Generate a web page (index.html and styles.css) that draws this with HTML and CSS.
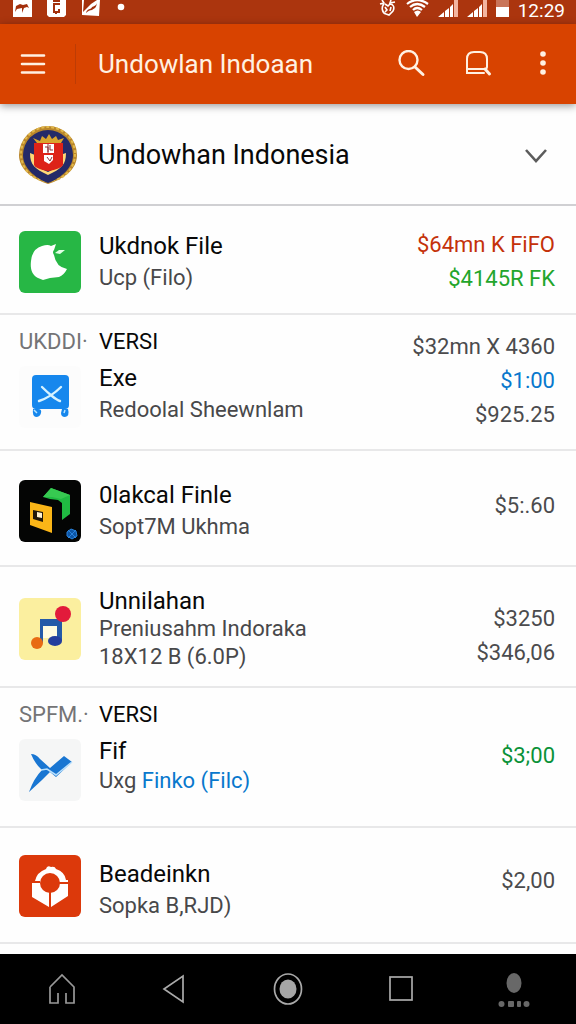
FILE: index.html
```html
<!DOCTYPE html>
<html lang="id">
<head>
    <meta charset="UTF-8">
    <meta name="viewport" content="width=device-width, initial-scale=1.0">
    <title>Undowhan Indonesia</title>
    <link rel="stylesheet" href="styles.css">
</head>
<body>
    <div class="status-bar">
        <div class="status-left">
            <svg width="19" height="17" viewBox="0 0 19 17"><path d="M0 0h19v17H0z" fill="#fff"/><path d="M3 6l4-2 3 1 4-1 2 4-2-1-3 1-2 5v-5l-5 1-2 3z" fill="#a3300c"/></svg>
            <svg width="19" height="17" viewBox="0 0 19 17"><path d="M0 0h19v15l-2 2H2l-2-2z" fill="#fff"/><path d="M6 1h7M13 4H7v8h5V9M9 12v2" fill="none" stroke="#a3300c" stroke-width="2"/></svg>
            <svg width="19" height="17" viewBox="0 0 19 17"><path d="M1 0h18l-1 16-17-1z" fill="#fff"/><path d="M3 0h13l-6 4-8 8zM5 13c1-5 5-3 6-6 2-1 4-1 5-4-1 5-2 5-5 7-2 0-4 1-6 3z" fill="#a3300c"/></svg>
            <svg width="12" height="17" viewBox="0 0 12 17"><circle cx="6" cy="7" r="3.300" fill="#fff"/></svg>
        </div>
        <div class="status-right">
            <svg width="18" height="17" viewBox="0 0 18 17"><path d="M5 4C2 7 3 13 7 14l3 1 4-4c2-4 0-7-3-7l-2 2-3-2M1 4l4-1-2-3M12 0l-1 3 5-1M6 7l2 3-2 2M12 7l-1 4" fill="none" stroke="#fff" stroke-width="1.600"/></svg>
            <svg width="23" height="17" viewBox="0 0 23 17"><path d="M1 4q10-8 21 0M4 7q7-6 15 0M7 10q4-4 9 0" fill="none" stroke="#fff" stroke-width="2.200"/><path d="M8 12q4-3 7 0l-4 5z" fill="#fff"/></svg>
            <svg width="20" height="17" viewBox="0 0 20 17"><path d="M0 17l6-5v5zM7 11l4-3v9H7zM12 7l3-3v13h-3z" fill="#fff"/><path d="M16 0h4v17h-4z" fill="#f3b5a0"/></svg>
            <svg width="20" height="17" viewBox="0 0 20 17"><path d="M0 17l6-5v5zM7 11l4-3v9H7zM12 7l3-3v13h-3z" fill="#fff"/><path d="M16 0h4v17h-4z" fill="#f3b5a0"/></svg>
            <svg width="13" height="17" viewBox="0 0 13 17"><path d="M0 0h13v8H0z" fill="#c9755a"/><path d="M0 7h13v10H0z" fill="#fff"/></svg>
            <span class="clock">12:29</span>
        </div>
    </div>

    <header class="app-bar">
        <button class="icon-btn menu-btn" aria-label="Menu">
            <svg width="26" height="22" viewBox="0 0 26 22"><path d="M2 2.500h22M2 11h22M2 19.500h22" stroke="#fff1e2" stroke-width="2.600" stroke-linecap="round"/></svg>
        </button>
        <h1 class="app-title">Undowlan Indoaan</h1>
        <div class="app-actions">
            <button class="icon-btn" aria-label="Cari">
                <svg width="28" height="28" viewBox="0 0 28 28" fill="none" stroke="#fff1e2" stroke-linecap="round"><circle cx="10.500" cy="10" r="9" stroke-width="2.400"/><path d="M17 17l8 7.500" stroke-width="3"/></svg>
            </button>
            <button class="icon-btn" aria-label="Notifikasi">
                <svg width="28" height="28" viewBox="0 0 28 28" fill="none" stroke="#fff1e2" stroke-linecap="round"><path d="M3 19V9q0-7 7-7h6q7 0 7 7v8q0 2-3 2H3v4h17" stroke-width="2"/><path d="M21 19l4.500 5" stroke-width="3"/></svg>
            </button>
            <button class="icon-btn" aria-label="Lainnya">
                <svg width="28" height="28" viewBox="0 0 28 28" fill="#fff1e2"><circle cx="13" cy="4" r="2.800"/><circle cx="13" cy="13" r="2.800"/><circle cx="13" cy="22" r="2.800"/></svg>
            </button>
        </div>
    </header>

    <main>
        <button class="account">
            <svg class="account-logo" width="60" height="60" viewBox="0 0 60 60">
                <path d="M30 1a29 29 0 0 1 29 29c0 15-14 24-29 29C15 54 1 45 1 30A29 29 0 0 1 30 1z" fill="#b9862b"/>
                <circle cx="30" cy="29" r="27" fill="none" stroke="#e2b84a" stroke-width="2" stroke-dasharray="3 2"/>
                <path d="M30 5a25 25 0 0 1 25 25c0 13-12 23-25 28C17 53 5 43 5 30A25 25 0 0 1 30 5z" fill="#242a68"/>
                <path d="M12 28l5 2v11l13 6 12-6V30l6-2c0 12-5 16-18 22-13-6-18-10-18-22z" fill="#ffd976"/>
                <path d="M16 18h29v22q-2 4-15 6-12-2-14-6z" fill="#dd2318"/>
                <path d="M15 13l7 3 2-5 4 3 3-5 3 5 4-3 2 4 6-2-3 5H19z" fill="#d9a52d"/>
                <path d="M25 19h11v9H25zM26 30h9v5l-4 4-5-3z" fill="#fff"/>
                <path d="M27 22h3v5M32 20v5h3M30 19v9M29 32l3 4 2-4" fill="none" stroke="#8b3038"/>
            </svg>
            <span class="account-name">Undowhan Indonesia</span>
            <svg width="28" height="20" viewBox="0 0 28 20"><path d="M4 5l10 11L24 5" fill="none" stroke="#5c5c5c" stroke-width="2.600"/></svg>
        </button>

        <ul class="list">
            <li class="row">
                <div class="media">
                    <svg width="62" height="62" viewBox="0 0 62 62">
                        <rect width="62" height="62" rx="6" fill="#27b745"/>
                        <path d="M23 15q6-2 9 0l5-2-2 6q-2 2 0 5 2 12 13 14-3 6-8 8l-9 1-7 2-5-2C13 44 11 38 12 30q1-12 11-15z" fill="#fff"/>
                        <path d="M36 22l4-3 6 0-5 4z" fill="#e2ffe5"/>
                    </svg>
                </div>
                <div class="info">
                    <h2 class="name">Ukdnok File</h2>
                    <p class="detail">Ucp (Filo)</p>
                </div>
                <div class="prices">
                    <span class="price red">$64mn K FiFO</span>
                    <span class="price lime">$4145R FK</span>
                </div>
            </li>

            <li class="row row-version">
                <div class="media">
                    <span class="tag">UKDDI·</span>
                    <svg class="tile" width="62" height="62" viewBox="0 0 62 62">
                        <rect width="62" height="62" rx="6" fill="#fcfcfc"/>
                        <rect x="13" y="9" width="37" height="34" rx="4" fill="#1687ed"/>
                        <path d="M20 35q12-4 22-14M23 21q5 5 10 9t8 5" fill="none" stroke="#d7f3ff" stroke-width="2.400" stroke-linecap="round"/>
                        <path d="M14 43h5q4 0 3 4-1 4-5 4-4-1-3-8zM43 43h6q2 7-3 8-4 0-4-4z" fill="#1687ed"/>
                        <path d="M15 44l3 3M46 44l-1 3" stroke="#b7e4ff" stroke-width="1.500"/>
                    </svg>
                </div>
                <div class="info">
                    <span class="version">VERSI</span>
                    <h2 class="name">Exe</h2>
                    <p class="detail">Redoolal Sheewnlam</p>
                </div>
                <div class="prices">
                    <span class="price">$32mn X 4360</span>
                    <span class="price blue">$1:00</span>
                    <span class="price">$925.25</span>
                </div>
            </li>

            <li class="row row-medium">
                <div class="media">
                    <svg width="62" height="62" viewBox="0 0 62 62">
                        <rect width="62" height="62" rx="6" fill="#040504"/>
                        <path d="M24 17l8-9 19 7v19l-8 6V23l-4-3-8-1z" fill="#20bb42"/>
                        <path d="M24 17l8-9 19 7-9 4-9-2z" fill="#37c951"/>
                        <path d="M11 22l22 5v26l-22-8z" fill="#fbb617"/>
                        <path d="M14 30l10 2v10l-10-3z" fill="#20170a"/>
                        <path d="M18 32l5 1v5l-5-1z" fill="#fff1cf"/>
                        <path d="M48 52l4-3 5 2 1 5-5 3-5-3zM49 50l8 8M57 50l-8 8" fill="#0c55a5" stroke="#2a83dd"/>
                    </svg>
                </div>
                <div class="info">
                    <h2 class="name">0lakcal Finle</h2>
                    <p class="detail">Sopt7M Ukhma</p>
                </div>
                <div class="prices">
                    <span class="price">$5:.60</span>
                </div>
            </li>

            <li class="row row-dense">
                <div class="media">
                    <svg width="62" height="62" viewBox="0 0 62 62">
                        <rect width="62" height="62" rx="6" fill="#fbef9f"/>
                        <path d="M24 28h14v12H24z" fill="#fffbe0"/>
                        <path d="M21 21h22v22h-5V28H24v17h-3z" fill="#245aa8"/>
                        <ellipse cx="36" cy="43" rx="7" ry="5" fill="#243e9d"/>
                        <ellipse cx="18" cy="45" rx="6" ry="6" fill="#e86b13"/>
                        <circle cx="44" cy="16" r="8" fill="#e21b3b"/>
                    </svg>
                </div>
                <div class="info">
                    <h2 class="name">Unnilahan</h2>
                    <p class="detail">Preniusahm Indoraka</p>
                    <p class="detail">18X12 B (6.0P)</p>
                </div>
                <div class="prices">
                    <span class="price">$3250</span>
                    <span class="price">$346,06</span>
                </div>
            </li>

            <li class="row row-version row-spfm">
                <div class="media">
                    <span class="tag">SPFM.·</span>
                    <svg class="tile" width="62" height="62" viewBox="0 0 62 62">
                        <rect width="62" height="62" rx="6" fill="#f5f6f6"/>
                        <path d="M12 15q5 0 9 5l10 9 14-12 8 6-16 15-6-5-8 8-13 12q5-14 13-22-7-6-11-16z" fill="#1976d2"/>
                        <path d="M22 31l6-1 9 6 16-13" fill="none" stroke="#b9e0fd" stroke-width="1.600"/>
                    </svg>
                </div>
                <div class="info">
                    <span class="version">VERSI</span>
                    <h2 class="name">Fif</h2>
                    <p class="detail">Uxg <a class="link" href="#">Finko (Filc)</a></p>
                </div>
                <div class="prices">
                    <span class="price green">$3;00</span>
                </div>
            </li>

            <li class="row row-last">
                <div class="media">
                    <svg width="62" height="62" viewBox="0 0 62 62">
                        <rect width="62" height="62" rx="6" fill="#dc390b"/>
                        <path d="M16 26q2-9 11-12 1-4 5-2 4-1 5 2 9 3 10 11h2v16L32 52h-2L13 42V26z" fill="#fff"/>
                        <circle cx="31" cy="28" r="10" fill="#dc390b"/>
                        <path d="M31 37v16M39 28h11M12 27h9" stroke="#dc390b" stroke-width="2"/>
                    </svg>
                </div>
                <div class="info">
                    <h2 class="name">Beadeinkn</h2>
                    <p class="detail">Sopka B,RJD)</p>
                </div>
                <div class="prices">
                    <span class="price">$2,00</span>
                </div>
            </li>
        </ul>
    </main>

    <nav class="nav-bar">
        <button class="icon-btn" aria-label="Beranda">
            <svg width="34" height="38" viewBox="0 0 34 38"><path d="M5 17L17 5l12 12v16h-8V23M13 23v10H5V17" fill="none" stroke="#999" stroke-width="1.700"/></svg>
        </button>
        <button class="icon-btn" aria-label="Kembali">
            <svg width="34" height="38" viewBox="0 0 34 38"><path d="M25 6v26L6 19z" fill="none" stroke="#aaa" stroke-width="1.700"/></svg>
        </button>
        <button class="icon-btn" aria-label="Layar utama">
            <svg width="34" height="38" viewBox="0 0 34 38"><ellipse cx="17" cy="19" rx="13.500" ry="15" fill="none" stroke="#aaa" stroke-width="1.700"/><ellipse cx="17" cy="19" rx="8.500" ry="9.500" fill="#a6a6a6"/></svg>
        </button>
        <button class="icon-btn" aria-label="Terkini">
            <svg width="34" height="38" viewBox="0 0 34 38"><rect x="6" y="7" width="22" height="23" fill="none" stroke="#aaa" stroke-width="1.700"/></svg>
        </button>
        <button class="icon-btn" aria-label="Profil">
            <svg width="34" height="38" viewBox="0 0 34 38" fill="#686868"><ellipse cx="17" cy="13" rx="7.500" ry="10"/><circle cx="4.500" cy="34" r="3"/><rect x="11" y="31" width="6" height="6" rx="1"/><rect x="20" y="31" width="4" height="6" rx="1"/><circle cx="29.500" cy="34" r="3"/></svg>
        </button>
    </nav>
</body>
</html>
```

FILE: styles.css
```css
* {
    box-sizing: border-box;
}

body {
    display: flex;
    flex-direction: column;
    min-height: 100vh;
    margin: 0;
    font-family: Roboto, "Liberation Sans", sans-serif;
    background-color: #fefefe;
    color: #080808;
}

h1, h2, p, ul {
    margin: 0;
    padding: 0;
    font-weight: normal;
}

button {
    border: none;
    background: none;
    padding: 0;
    font-family: inherit;
    color: inherit;
    cursor: pointer;
}

svg {
    display: block;
    flex-shrink: 0;
}

/* Status bar */
.status-bar {
    display: flex;
    justify-content: space-between;
    height: 24px;
    padding: 0 11px 0 13px;
    background-color: #ab350e;
    color: #fff;
}

.status-left {
    display: flex;
    gap: 15px;
}

.status-right {
    display: flex;
    gap: 9px;
}

.clock {
    font-size: 19px;
    line-height: 22px;
}

/* App bar */
.app-bar {
    position: relative;
    display: flex;
    align-items: center;
    height: 80px;
    padding: 0 18px 0 0;
    background-color: #d84300;
    color: #fff1e2;
    box-shadow: 0 2px 8px rgba(0, 0, 0, 0.4);
}

.icon-btn {
    display: flex;
    align-items: center;
    justify-content: center;
}

.menu-btn {
    width: 76px;
    height: 40px;
    padding-right: 10px;
    border-right: 1px solid #bd3c05;
}

.app-title {
    flex: 1;
    padding-left: 22px;
    font-size: 26px;
    line-height: 32px;
}

.app-actions {
    display: flex;
    gap: 38px;
}

/* Account */
.account {
    display: flex;
    align-items: center;
    width: 100%;
    height: 102px;
    padding: 2px 26px 0 18px;
    border-bottom: 2px solid #d0d0d3;
    text-align: left;
}

.account-name {
    flex: 1;
    padding-left: 20px;
    font-size: 27px;
    line-height: 32px;
}

/* File list */
main {
    flex: 1;
}

.list {
    list-style: none;
}

.row {
    display: flex;
    align-items: center;
    padding: 22px 21px 17px 19px;
    border-bottom: 2px solid #e8e8e9;
}

.media {
    flex: 0 0 80px;
}

.info {
    flex: 1;
}

.name {
    font-size: 24px;
    line-height: 32px;
}

.detail {
    font-size: 22px;
    line-height: 32px;
    color: #48484a;
}

.prices {
    display: flex;
    flex-direction: column;
    align-items: flex-end;
}

.price {
    font-size: 22px;
    line-height: 34px;
    color: #4b4b4d;
}

.version, .tag {
    display: block;
    font-size: 22px;
    line-height: 32px;
}

.tag {
    color: #747476;
    white-space: nowrap;
}

.red {
    color: #c43109;
}

.lime {
    color: #22a52b;
}

.green {
    color: #0a9238;
}

.blue, .link {
    color: #0878cd;
}

.link {
    text-decoration: none;
}

.row-medium {
    padding-top: 28px;
    padding-bottom: 22px;
}

.row-medium .prices, .row-last .prices {
    padding-bottom: 10px;
}

.row-dense {
    padding-top: 20px;
    padding-bottom: 15px;
}

.row-dense .name, .row-dense .detail {
    line-height: 28px;
}

.row-dense .prices {
    padding-top: 14px;
}

.row-version {
    align-items: flex-start;
    padding-top: 11px;
}

.row-version .prices {
    padding-top: 4px;
}

.row-version .tile {
    margin-top: 8px;
}

.row-version .name {
    padding-top: 4px;
}

.row-spfm {
    padding-bottom: 25px;
}

.row-spfm .prices {
    align-self: center;
    padding-top: 12px;
}

.row-spfm .detail {
    line-height: 28px;
}

.row-last {
    padding-top: 22px;
    padding-bottom: 20px;
}

.row-last .info {
    padding-top: 8px;
}

/* Navigation */
.nav-bar {
    display: flex;
    justify-content: space-between;
    height: 70px;
    padding: 0 45px;
    background-color: #000;
}
```
